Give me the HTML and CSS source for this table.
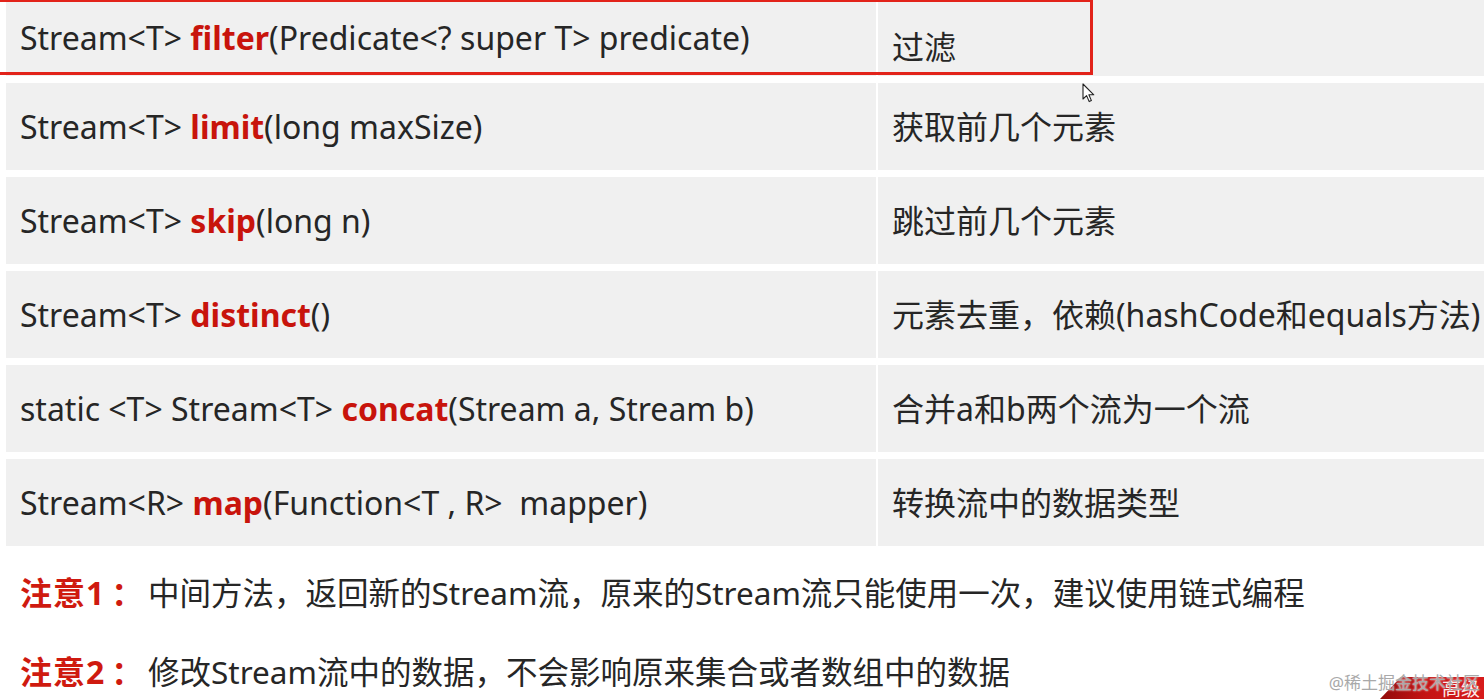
FILE: index.html
```html
<!DOCTYPE html>
<html lang="zh">
<head>
<meta charset="utf-8">
<title>Stream 中间方法</title>
<link rel="stylesheet" href="styles.css">
</head>
<body>
<div class="page">
  <div class="table">
    <div class="row first">
      <div class="cell sig"><span>Stream&lt;T&gt; <b>filter</b>(Predicate&lt;? super T&gt; predicate)</span></div>
      <div class="cell desc"><span>过滤</span></div>
    </div>
    <div class="row">
      <div class="cell sig"><span>Stream&lt;T&gt; <b>limit</b>(long maxSize)</span></div>
      <div class="cell desc"><span>获取前几个元素</span></div>
    </div>
    <div class="row">
      <div class="cell sig"><span>Stream&lt;T&gt; <b>skip</b>(long n)</span></div>
      <div class="cell desc"><span>跳过前几个元素</span></div>
    </div>
    <div class="row">
      <div class="cell sig"><span>Stream&lt;T&gt; <b>distinct</b>()</span></div>
      <div class="cell desc"><span>元素去重，依赖(hashCode和equals方法)</span></div>
    </div>
    <div class="row">
      <div class="cell sig"><span>static &lt;T&gt; Stream&lt;T&gt; <b>concat</b>(Stream a, Stream b)</span></div>
      <div class="cell desc"><span>合并a和b两个流为一个流</span></div>
    </div>
    <div class="row">
      <div class="cell sig"><span>Stream&lt;R&gt; <b>map</b>(Function&lt;T , R&gt;&nbsp; mapper)</span></div>
      <div class="cell desc"><span>转换流中的数据类型</span></div>
    </div>
  </div>

  <div class="notes">
    <p class="note"><span class="tag">注意1<span class="colon">：</span></span><span>中间方法，返回新的Stream流，原来的Stream流只能使用一次，建议使用链式编程</span></p>
    <p class="note"><span class="tag">注意2<span class="colon">：</span></span><span>修改Stream流中的数据，不会影响原来集合或者数组中的数据</span></p>
  </div>

  <div class="highlight"></div>

  <svg class="cursor" width="14" height="20" viewBox="0 0 14 20">
    <path d="M1 1 L1 16 L4.6 12.6 L7.2 18.6 L9.4 17.6 L6.9 11.8 L11.8 11.8 Z" fill="#fff" stroke="#222" stroke-width="1.1" stroke-linejoin="round"/>
  </svg>

  <div class="corner">
    <div class="ribbon"><span>高级</span></div>
    <div class="watermark">@稀土掘金技术社区</div>
  </div>
</div>
</body>
</html>
```

FILE: styles.css
```css
* { box-sizing: border-box; }

html, body {
  margin: 0;
  padding: 0;
  background: #ffffff;
}

body {
  width: 1484px;
  height: 699px;
  overflow: hidden;
  font-family: "Noto Sans", "Noto Sans CJK SC", sans-serif;
  color: #262626;
}

.page {
  position: relative;
  width: 1484px;
  height: 699px;
  overflow: hidden;
}

.table {
  margin-top: -11px;
  padding-left: 6px;
  display: flex;
  flex-direction: column;
  gap: 7px;
}

.row {
  display: grid;
  grid-template-columns: 870px 1fr;
  column-gap: 2px;
  height: 87px;
}

.cell {
  background: #f0f0f0;
  display: flex;
  align-items: center;
  font-size: 32px;
  line-height: 40px;
  white-space: nowrap;
  overflow: hidden;
}

.sig { padding-left: 14px; }
.desc { padding-left: 14px; }

.sig b {
  color: #c8140c;
  font-weight: 700;
}

.row.first .sig { padding-top: 10px; }
.row.first .desc { padding-top: 28px; }

.notes {
  padding-left: 20px;
  margin-top: 27px;
  display: flex;
  flex-direction: column;
  gap: 39px;
}

.note {
  margin: 0;
  height: 40px;
  line-height: 40px;
  font-size: 31.5px;
  white-space: nowrap;
  display: flex;
}

.tag {
  color: #cf1a0f;
  font-weight: 700;
  width: 128px;
  font-size: 32px;
  letter-spacing: 1px;
}

.colon {
  display: inline-block;
  padding-left: 6px;
}

.highlight {
  position: absolute;
  left: -3px;
  top: -1px;
  width: 1096px;
  height: 76px;
  border: 3px solid #e2231a;
}

.cursor {
  position: absolute;
  left: 1082px;
  top: 83px;
}

.corner {
  position: absolute;
  right: 0;
  bottom: 0;
  width: 180px;
  height: 40px;
}

.ribbon {
  position: absolute;
  right: 0;
  bottom: 0;
  width: 104px;
  height: 22px;
  background: linear-gradient(100deg, #8e0b0b 0%, #c41414 45%, #d81c1c 100%);
  clip-path: polygon(0 100%, 20% 0, 100% 0, 100% 100%);
  overflow: hidden;
}

.ribbon span {
  position: absolute;
  left: 62px;
  top: 1px;
  font-size: 19px;
  line-height: 20px;
  color: #fbe9e9;
  font-family: "Noto Sans CJK SC", serif;
}

.watermark {
  position: absolute;
  right: 4px;
  bottom: 6px;
  font-size: 17px;
  line-height: 20px;
  color: #a9a9a9;
  white-space: nowrap;
  text-shadow: 0 0 2px #fff;
}
```
